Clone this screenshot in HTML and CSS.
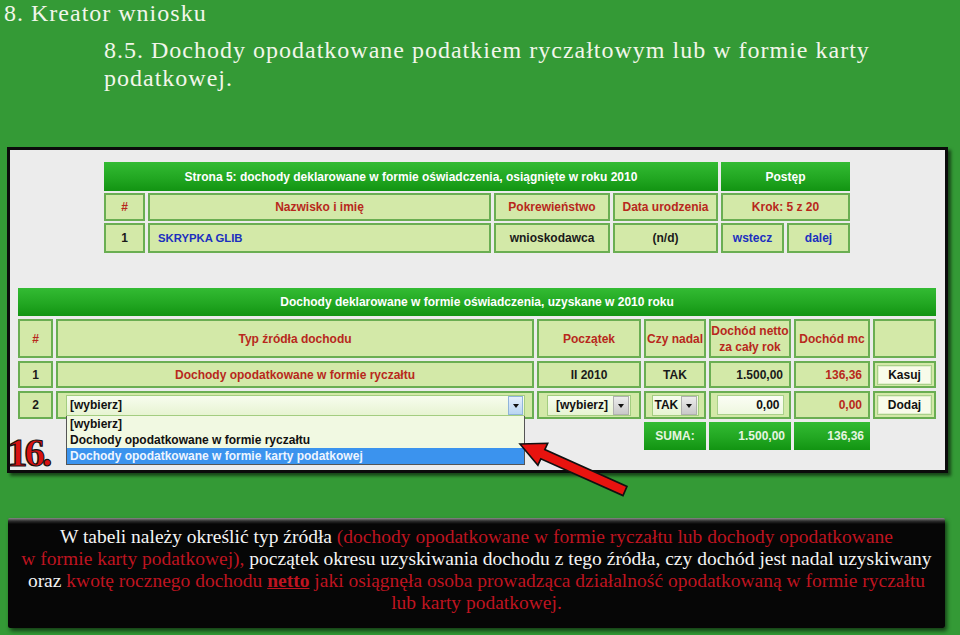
FILE: index.html
```html
<!DOCTYPE html>
<html lang="pl">
<head>
<meta charset="utf-8">
<title>8. Kreator wniosku</title>
<link rel="stylesheet" href="styles.css">
</head>
<body>
<h1 class="title">8. Kreator wniosku</h1>
<h2 class="subtitle">8.5. Dochody opodatkowane podatkiem ryczałtowym lub w formie karty<br>podatkowej.</h2>

<div class="shot">
  <div class="grid top">
    <div class="hd span4">Strona 5: dochody deklarowane w formie oświadczenia, osiągnięte w roku 2010</div>
    <div class="hd span2">Postęp</div>

    <div class="c red">#</div>
    <div class="c red">Nazwisko i imię</div>
    <div class="c red">Pokrewieństwo</div>
    <div class="c red">Data urodzenia</div>
    <div class="c red span2">Krok: 5 z 20</div>

    <div class="c">1</div>
    <div class="c left blue name">SKRYPKA GLIB</div>
    <div class="c">wnioskodawca</div>
    <div class="c">(n/d)</div>
    <div class="c blue">wstecz</div>
    <div class="c blue">dalej</div>
  </div>

  <div class="grid bottom">
    <div class="hd span7">Dochody deklarowane w formie oświadczenia, uzyskane w 2010 roku</div>

    <div class="c red">#</div>
    <div class="c red">Typ źródła dochodu</div>
    <div class="c red">Początek</div>
    <div class="c red">Czy nadal</div>
    <div class="c red two">Dochód netto<br>za cały rok</div>
    <div class="c red">Dochód mc</div>
    <div class="c"></div>

    <div class="c">1</div>
    <div class="c red">Dochody opodatkowane w formie ryczałtu</div>
    <div class="c">II 2010</div>
    <div class="c">TAK</div>
    <div class="c right">1.500,00</div>
    <div class="c right red">136,36</div>
    <div class="c"><span class="btn">Kasuj</span></div>

    <div class="c">2</div>
    <div class="c typ">
      <div class="select-wrap">
        <div class="select wide"><span class="sel-text">[wybierz]</span><span class="arrow blue-arrow"></span></div>
        <ul class="dropdown">
          <li>[wybierz]</li>
          <li>Dochody opodatkowane w formie ryczałtu</li>
          <li class="active">Dochody opodatkowane w formie karty podatkowej</li>
        </ul>
      </div>
    </div>
    <div class="c"><div class="select start"><span class="sel-text">[wybierz]</span><span class="arrow"></span></div></div>
    <div class="c"><div class="select yes"><span class="sel-text">TAK</span><span class="arrow"></span></div></div>
    <div class="c"><span class="input">0,00</span></div>
    <div class="c right red">0,00</div>
    <div class="c"><span class="btn">Dodaj</span></div>

    <div class="hd sum first">SUMA:</div>
    <div class="hd sum right">1.500,00</div>
    <div class="hd sum right">136,36</div>
  </div>
</div>

<div class="num">16.</div>

<svg class="pointer" width="120" height="62" viewBox="0 0 120 62" aria-hidden="true">
  <polygon points="5,6 32.7,5.3 29.8,11.6 112,48.4 108,57.6 25.8,20.8 22.9,27.2" fill="#e8130f" stroke="#111" stroke-width="1.6" stroke-linejoin="miter"/>
</svg>

<div class="note">
  <p>W tabeli należy określić typ źródła <span class="r">(dochody opodatkowane w formie ryczałtu lub dochody opodatkowane</span><br>
  <span class="r">w formie karty podatkowej),</span> początek okresu uzyskiwania dochodu z tego źródła, czy dochód jest nadal uzyskiwany<br>
  oraz <span class="r">kwotę rocznego dochodu <b class="u">netto</b> jaki osiągnęła osoba prowadząca działalność opodatkowaną w formie ryczałtu</span><br>
  <span class="r">lub karty podatkowej.</span></p>
</div>
</body>
</html>
```

FILE: styles.css
```css
* { box-sizing: border-box; }

body {
  margin: 0;
  width: 960px;
  height: 635px;
  overflow: hidden;
  position: relative;
  background: #349a36;
  font-family: "Liberation Sans", Arial, sans-serif;
}

.title {
  margin: 0;
  padding-left: 4px;
  font: normal 24px/26px "Liberation Serif", "Times New Roman", serif;
  letter-spacing: 1px;
  color: #f2f6ea;
}

.subtitle {
  margin: 10px 0 0 104px;
  font: normal 24px/28px "Liberation Serif", "Times New Roman", serif;
  letter-spacing: 1px;
  color: #f2f6ea;
}

/* screenshot panel */
.shot {
  margin: 55px 0 0 7px;
  width: 941px;
  height: 326px;
  border: 3px solid #0b0b0b;
  background: #ececec;
  box-shadow: 3px 3px 3px rgba(0, 0, 0, 0.55);
  padding-top: 12px;
}

.grid {
  display: grid;
  font-size: 12px;
  font-weight: bold;
  color: #1a1a1a;
}

.grid.top {
  margin-left: 94px;
  width: 746px;
  grid-template-columns: 41px 343px 116px 105px 63px 63px;
  grid-template-rows: 29px 28px 30px;
  column-gap: 3px;
  row-gap: 2px;
}

.grid.bottom {
  margin: 35px 0 0 8px;
  width: 918px;
  grid-template-columns: 35px 478px 104px 62px 82px 76px 63px;
  grid-template-rows: 28px 39px 27px 28px 28px;
  column-gap: 3px;
  row-gap: 3px;
}

.span2 { grid-column: span 2; }
.span4 { grid-column: span 4; }
.span7 { grid-column: span 7; }

.hd {
  display: flex;
  align-items: center;
  justify-content: center;
  color: #ffffff;
  background: linear-gradient(#33bb33 0%, #22a722 55%, #129412 100%);
}

.c {
  display: flex;
  align-items: center;
  justify-content: center;
  background: #d3e9a8;
  border: 2px solid #6aae52;
  text-align: center;
}

.c.left { justify-content: flex-start; padding-left: 8px; }
.right { justify-content: flex-end; padding-right: 6px; }
.red { color: #b8281c; }
.blue { color: #1b2fbf; }
.name { font-size: 11.3px; }
.two { line-height: 16px; }

.sum.first { grid-column: 4; }
.sum { color: #e6f5e0; }

.btn {
  display: flex;
  align-items: center;
  justify-content: center;
  width: 55px;
  height: 20px;
  background: #f8fbea;
  border: 1px solid #a9d08a;
  box-shadow: inset 0 0 0 1px #e2efcc;
  color: #111;
}

.input {
  display: flex;
  align-items: center;
  justify-content: flex-end;
  width: 67px;
  height: 20px;
  padding-right: 3px;
  background: linear-gradient(#fbfdf5, #eef7df);
  border: 1px solid #a9d08a;
  color: #111;
}

/* select imitations */
.typ {
  justify-content: stretch;
  padding: 0 7px 0 8px;
  text-align: left;
}

.select-wrap {
  position: relative;
  width: 100%;
}

.select {
  display: flex;
  align-items: center;
  height: 21px;
  border: 1px solid #a3cd80;
  background: linear-gradient(#f7fcee, #e7f4d2);
  color: #111;
}

.select .sel-text {
  flex: 1;
  padding-left: 3px;
  text-align: left;
}

.select.start { width: 84px; }
.select.start .sel-text { text-align: center; }
.select.yes { width: 47px; }
.select.yes .sel-text { padding-left: 2px; }

.arrow {
  position: relative;
  width: 16px;
  height: 19px;
  margin-right: 1px;
  background: linear-gradient(#ececec, #c9c9c9);
  border: 1px solid #b0b0b0;
}

.arrow::after {
  content: "";
  position: absolute;
  left: 4px;
  top: 7px;
  border-left: 3.5px solid transparent;
  border-right: 3.5px solid transparent;
  border-top: 4px solid #111;
}

.arrow.blue-arrow {
  width: 15px;
  background: linear-gradient(#e4effb, #b9d5f2);
  border-color: #90b4da;
}

.dropdown {
  position: absolute;
  left: 0;
  right: 0;
  top: 100%;
  z-index: 2;
  margin: 0;
  padding: 0;
  list-style: none;
  background: #f1f9e2;
  border: 1px solid #555;
  border-top: none;
  text-align: left;
}

.dropdown li {
  height: 16px;
  line-height: 16px;
  padding-left: 3px;
  color: #111;
}

.dropdown li.active {
  background: #3b93ee;
  color: #eef5ff;
}

/* "16." label */
.num {
  position: absolute;
  left: 7px;
  top: 430px;
  font: bold 41px/44px "Liberation Serif", "Times New Roman", serif;
  letter-spacing: -3px;
  color: #d81212;
  -webkit-text-stroke: 1.2px #111;
  z-index: 3;
}

.pointer {
  position: absolute;
  left: 515px;
  top: 438px;
  z-index: 4;
}

/* note box */
.note {
  margin: 45px 0 0 8px;
  width: 937px;
  height: 110px;
  padding-top: 8px;
  background: linear-gradient(#8a8a8a 0px, #2e2e2e 3px, #060606 6px);
  border-radius: 2px;
  box-shadow: 2px 3px 4px rgba(0, 0, 0, 0.6);
}

.note p {
  margin: 0;
  font: normal 19.5px/22px "Liberation Serif", "Times New Roman", serif;
  color: #f4f4f4;
  text-align: center;
}

.note .r { color: #bf1420; }
.note .u { text-decoration: underline; }
```
